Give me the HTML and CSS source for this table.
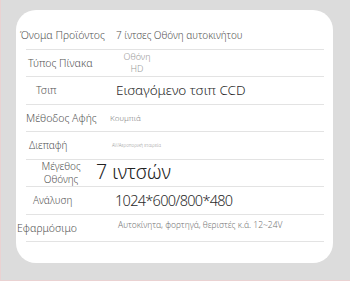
FILE: index.html
```html
<!DOCTYPE html>
<html lang="el">
<head>
  <meta charset="UTF-8">
  <meta name="viewport" content="width=device-width, initial-scale=1.0">
  <title>Προδιαγραφές</title>
  <link rel="stylesheet" href="styles.css">
</head>
<body>
  <main class="card">
    <div class="row r-name">
      <span class="label">Όνομα Προϊόντος</span>
      <span class="value">7 ίντσες Οθόνη αυτοκινήτου</span>
    </div>
    <div class="row r-panel">
      <span class="label">Τύπος Πίνακα</span>
      <span class="value">Οθόνη<br>HD</span>
    </div>
    <div class="row r-chip">
      <span class="label">Τσιπ</span>
      <span class="value">Εισαγόμενο τσιπ CCD</span>
    </div>
    <div class="row r-touch">
      <span class="label">Μέθοδος Αφής</span>
      <span class="value">Κουμπιά</span>
    </div>
    <div class="row r-port">
      <span class="label">Διεπαφή</span>
      <span class="value">AV/Αεροπορική εταιρεία</span>
    </div>
    <div class="row r-size">
      <span class="label">Μέγεθος<br>Οθόνης</span>
      <span class="value">7 ιντσών</span>
    </div>
    <div class="row r-res">
      <span class="label">Ανάλυση</span>
      <span class="value">1024*600/800*480</span>
    </div>
    <div class="row r-use">
      <span class="label">Εφαρμόσιμο</span>
      <span class="value">Αυτοκίνητα, φορτηγά, θεριστές κ.ά. 12~24V</span>
    </div>
  </main>
</body>
</html>
```

FILE: styles.css
```css
* {
  box-sizing: border-box;
}

body {
  margin: 0;
  height: 281px;
  background: #dcdcdc;
  border-left: 1px solid #ead2d2;
  border-bottom: 1px solid #ead2d2;
  font-family: 'Noto Sans', sans-serif;
  font-weight: 300;
  color: #555;
  padding: 10px 17px 0 15px;
}

.card {
  background: #fff;
  border-radius: 20px;
  height: 253px;
  padding: 12px 9px 0 10px;
}

.row {
  display: flex;
  align-items: center;
  height: 27.5px;
  border-bottom: 1px solid #e3e3e3;
}

.label {
  flex: 0 0 auto;
  font-size: 10.5px;
  line-height: 12px;
  white-space: nowrap;
}

.value {
  white-space: nowrap;
}

/* each spec row sits a little differently */
.r-name .label { margin-left: -6px; width: 96px; }
.r-name .value { font-size: 10px; color: #555; }

.r-panel .label { margin-left: 2px; width: 93px; }
.r-panel .value {
  width: 32px;
  text-align: center;
  font-size: 9px;
  line-height: 12px;
  color: #9a9a9a;
}

.r-chip .label { margin-left: 10px; width: 80px; }
.r-chip .value { font-size: 13.5px; color: #2a2a2a; }

.r-touch .label { width: 84px; }
.r-touch .value { font-size: 8px; color: #888; }

.r-port .label { margin-left: 3px; width: 83px; font-size: 10px; }
.r-port .value { font-size: 4.5px; color: #999; }

.r-size .label {
  width: 70px;
  text-align: center;
  font-size: 10px;
  line-height: 12.5px;
}
.r-size .value { font-size: 19.5px; color: #222; margin-top: -3px; }

.r-res .label { margin-left: 7px; width: 82px; font-size: 10px; }
.r-res .value { font-size: 14.5px; color: #2a2a2a; letter-spacing: -0.7px; }

.r-use .label { margin-left: -9px; width: 101px; }
.r-use .value { font-size: 8.5px; color: #777; margin-top: -6px; }
```
